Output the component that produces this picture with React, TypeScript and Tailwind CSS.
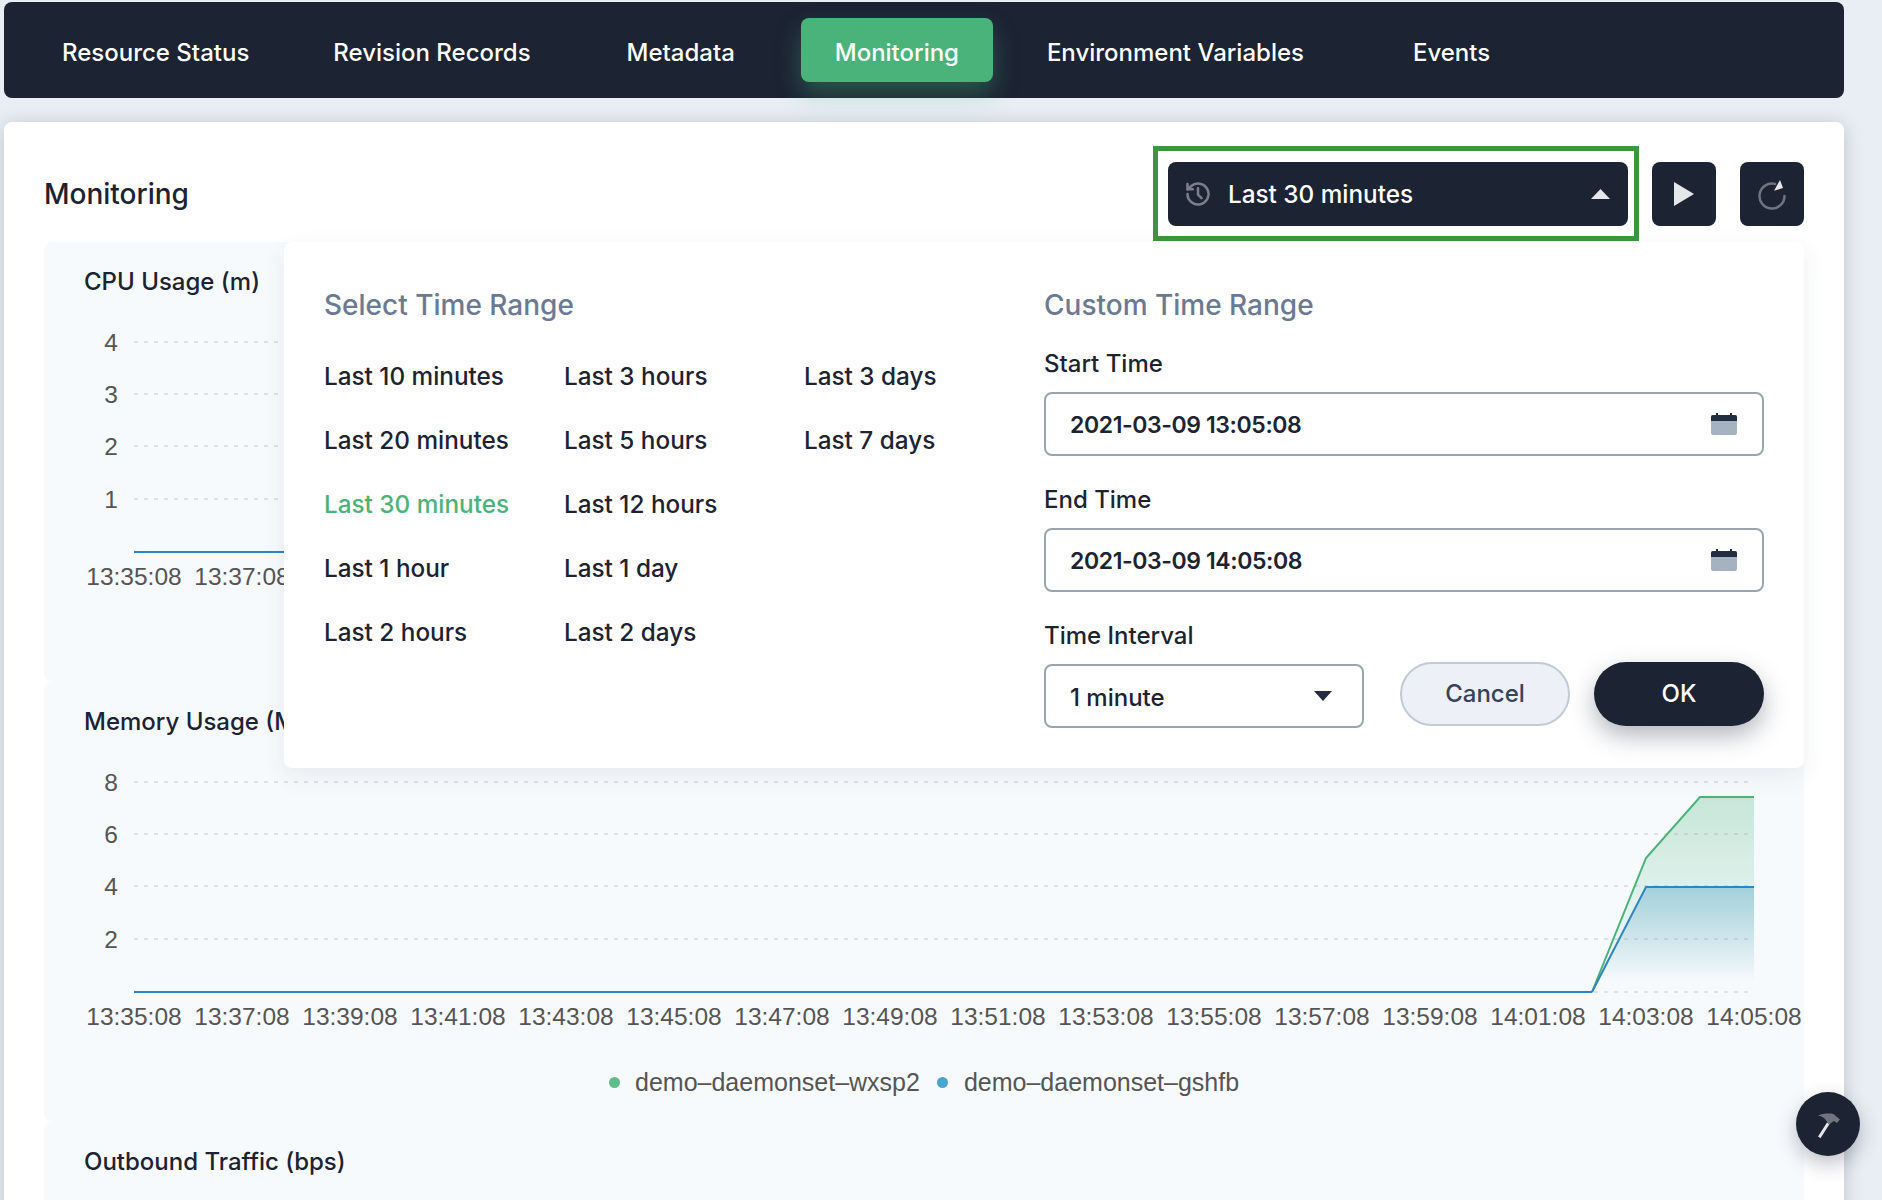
const times = ["13:35:08", "13:37:08", "13:39:08", "13:41:08", "13:43:08", "13:45:08", "13:47:08", "13:49:08", "13:51:08", "13:53:08", "13:55:08", "13:57:08", "13:59:08", "14:01:08", "14:03:08", "14:05:08"];

const tabs = [
  { label: "Resource Status", cls: "ml-[23px] px-[35px]" },
  { label: "Revision Records", cls: "ml-[14px] px-[35px]" },
  { label: "Metadata", cls: "ml-[26px] px-[35px]" },
  { label: "Monitoring", cls: "ml-[31px] w-[192px] justify-center bg-[#4ab37a] rounded-lg shadow-[0_12px_24px_rgba(74,179,122,0.35)]" },
  { label: "Environment Variables", cls: "ml-[19px] px-[35px]" },
  { label: "Events", cls: "ml-[39px] px-[35px]" },
];

const ranges = [
  ["Last 10 minutes", "Last 20 minutes", "Last 30 minutes", "Last 1 hour", "Last 2 hours"],
  ["Last 3 hours", "Last 5 hours", "Last 12 hours", "Last 1 day", "Last 2 days"],
  ["Last 3 days", "Last 7 days"],
];

function ChartCard({ title, yLabels, labels, children }: { title: string; yLabels: string[]; labels: string[]; children?: React.ReactNode }) {
  const rows = [58, 110, 162, 215];
  return (
    <div className="bg-[#f7fafd] rounded-lg h-[440px] shrink-0">
      <div className="px-10 pt-[25px] text-[24px] font-medium leading-[30px] text-[#1c2333]">{title}</div>
      {/* svg coordinates: x = page x - 44, y = page y - card top - 42 */}
      <svg width="1760" height="320" className="block mt-[-13px] font-['Liberation_Sans',sans-serif]">
        {rows.map((y, i) => (
          <g key={y}>
            <line x1="90" x2="1704" y1={y} y2={y} stroke="#dde1e7" strokeWidth="2" strokeDasharray="4 6" />
            <text x="74" y={y + 9} textAnchor="end" fontSize="24.5" fill="#555">{yLabels[i]}</text>
          </g>
        ))}
        <line x1="90" x2="1704" y1="268" y2="268" stroke="#dde1e7" strokeWidth="2" strokeDasharray="4 6" />
        {children}
        <line x1="90" x2="1548" y1="268" y2="268" stroke="#2d86c2" strokeWidth="2" />
        {labels.map((t, i) => (
          <text key={t} x={90 + i * 108} y="300.5" textAnchor="middle" fontSize="24.5" fill="#555">{t}</text>
        ))}
      </svg>
    </div>
  );
}

function CalendarIcon() {
  return (
    <svg width="28" height="22" viewBox="0 0 28 22">
      <rect x="1" y="2" width="26" height="20" rx="2" fill="#a5b3c0" />
      <path d="M1 4a2 2 0 0 1 2-2h22a2 2 0 0 1 2 2v4H1z" fill="#242e42" />
      <rect x="6" y="0" width="2" height="4" fill="#242e42" />
      <rect x="20" y="0" width="2" height="4" fill="#242e42" />
    </svg>
  );
}

function DateInput({ value }: { value: string }) {
  return (
    <div className="mt-[13px] h-[64px] w-[720px] rounded-lg border-2 border-[#9aa5b1] flex items-center justify-between pl-[24px] pr-[24px]">
      <span className="pt-[2px] text-[23px] tracking-[-0.4px] font-semibold text-[#1c2333]">{value}</span>
      <CalendarIcon />
    </div>
  );
}

export default function App() {
  return (
    <div className="relative h-[1200px] w-[1882px] overflow-hidden bg-[#e9eef4] pl-[4px] pt-[2px] font-['Inter',sans-serif]">
      <nav className="w-[1840px] h-[96px] bg-[#1c2333] rounded-lg flex items-center">
        {tabs.map((t) => (
          <div key={t.label} className={`h-[64px] pt-[5px] flex items-center text-[24px] font-medium text-white ${t.cls}`}>{t.label}</div>
        ))}
      </nav>

      <main className="relative w-[1840px] h-[1100px] mt-[24px] bg-white rounded-t-lg shadow-[0_2px_18px_rgba(36,46,66,0.22)] px-10 pt-[24px]">
        <header className="flex items-start justify-between h-[95px]">
          <h1 className="mt-[30px] text-[28px] font-medium leading-[36px] text-[#1c2333]">Monitoring</h1>
          <div className="flex items-start">
            <div className="border-[5px] border-[#3d963f] pt-[11px] pb-[10px] pl-[10px] pr-[6px]">
              <button className="w-[460px] h-[64px] bg-[#1c2333] rounded-lg flex items-center pl-[16px] pr-[18px] text-white text-[24.3px] font-medium">
                <svg width="28" height="28" viewBox="0 0 24 24" fill="none" stroke="#7a7f8a" strokeWidth="2.2" strokeLinecap="round" strokeLinejoin="round">
                  <path d="M3 12a9 9 0 1 0 3-6.7L3 8" />
                  <path d="M3 3.5V8h4.5" />
                  <path d="M12 7v5.5l3 3" />
                </svg>
                <span className="ml-[16px]">Last 30 minutes</span>
                <svg width="19" height="10" viewBox="0 0 19 10" className="ml-auto"><path d="M9.5 0L19 10H0z" fill="#e5e7eb" /></svg>
              </button>
            </div>
            <button className="ml-[13px] mt-[16px] w-[64px] h-[64px] rounded-lg bg-[#1c2333] flex items-center justify-center">
              <svg width="20" height="24" viewBox="0 0 20 24"><path d="M0 0l20 12L0 24z" fill="#e5e7eb" /></svg>
            </button>
            <button className="ml-[24px] mt-[16px] w-[64px] h-[64px] rounded-lg bg-[#1c2333] flex items-center justify-center">
              <svg width="30" height="32" viewBox="0 0 30 32" fill="none">
                <path d="M18 5.9A12.5 12.5 0 1 0 27.5 18" stroke="#6f7480" strokeWidth="2.5" strokeLinecap="round" />
                <path d="M23 2L26 10L17 12.7z" fill="#e5e7eb" />
              </svg>
            </button>
          </div>
        </header>

        <div className="mt-px flex flex-col">
          <ChartCard title="CPU Usage (m)" yLabels={["4", "3", "2", "1"]} labels={times.slice(0, 2)} />
          <ChartCard title="Memory Usage (MiB)" yLabels={["8", "6", "4", "2"]} labels={times}>
            <defs>
              <linearGradient id="greenFill" x1="0" y1="0" x2="0" y2="1">
                <stop offset="0" stopColor="#4ab37a" stopOpacity="0.28" />
                <stop offset="0.95" stopColor="#4ab37a" stopOpacity="0" />
              </linearGradient>
              <linearGradient id="blueFill" x1="0" y1="0" x2="0" y2="1">
                <stop offset="0" stopColor="#55a4c4" stopOpacity="0.42" />
                <stop offset="0.9" stopColor="#55a4c4" stopOpacity="0" />
              </linearGradient>
            </defs>
            <path d="M1548 268L1602 134L1656 73H1710V268z" fill="url(#greenFill)" />
            <path d="M1548 268L1602 163H1710V268z" fill="url(#blueFill)" />
            <path d="M1548 268L1602 134L1656 73H1710" fill="none" stroke="#4ab37a" strokeWidth="2" />
            <path d="M1548 268L1602 163H1710" fill="none" stroke="#2d86c2" strokeWidth="2" />
          </ChartCard>
          <div className="bg-[#f7fafd] rounded-t-lg h-[120px] px-10 pt-[25px] text-[24px] font-medium leading-[30px] text-[#1c2333]">Outbound Traffic (bps)</div>
        </div>

        {/* legend of the memory chart */}
        <div className="absolute left-[605px] top-[942px] flex items-center font-['Liberation_Sans',sans-serif] text-[25px] text-[#555]">
          <span className="h-[11px] w-[11px] rounded-full bg-[#5fbd8a]" />
          <span className="ml-[15px]">demo–daemonset–wxsp2</span>
          <span className="ml-[17px] h-[11px] w-[11px] rounded-full bg-[#4ba3d0]" />
          <span className="ml-[16px]">demo–daemonset–gshfb</span>
        </div>

        {/* time range popup */}
        <div className="absolute left-[280px] top-[120px] w-[1520px] h-[526px] bg-white rounded-lg shadow-[0_8px_24px_rgba(36,46,66,0.08)] flex">
          <div className="w-[760px] pl-[40px] pt-[46px]">
            <div className="text-[28px] font-medium leading-[34px] text-[#6b7a94]">Select Time Range</div>
            <div className="mt-[22px] flex">
              {ranges.map((col, i) => (
                <div key={i} className="w-[240px] flex flex-col">
                  {col.map((r) => (
                    <div key={r} className={`h-[64px] flex items-center text-[24.3px] font-medium ${r === "Last 30 minutes" ? "text-[#4ab37a]" : "text-[#1c2333]"}`}>{r}</div>
                  ))}
                </div>
              ))}
            </div>
          </div>
          <div className="pt-[46px]">
            <div className="text-[28px] font-medium leading-[34px] text-[#6b7a94]">Custom Time Range</div>
            <div className="mt-[27px] text-[24px] font-medium leading-[30px] text-[#1c2333]">Start Time</div>
            <DateInput value="2021-03-09 13:05:08" />
            <div className="mt-[29px] text-[24px] font-medium leading-[30px] text-[#1c2333]">End Time</div>
            <DateInput value="2021-03-09 14:05:08" />
            <div className="mt-[29px] text-[24px] font-medium leading-[30px] text-[#1c2333]">Time Interval</div>
            <div className="mt-[11px] flex items-start">
              <div className="mt-[2px] h-[64px] w-[320px] rounded-lg border-2 border-[#9aa5b1] flex items-center justify-between pl-[24px] pr-[30px] text-[24px] font-medium text-[#1c2333]">
                <span className="pt-[3px]">1 minute</span>
                <svg width="18" height="10" viewBox="0 0 18 10"><path d="M0 0h18L9 10z" fill="#242e42" /></svg>
              </div>
              <button className="ml-[36px] h-[64px] w-[170px] rounded-full border-2 border-[#c1cad6] bg-[#edf1f7] text-[24px] font-medium text-[#36435c]">Cancel</button>
              <button className="ml-[24px] h-[64px] w-[170px] rounded-full bg-[#1c2333] text-[24px] font-medium text-white shadow-[0_10px_24px_rgba(36,46,66,0.35)]">OK</button>
            </div>
          </div>
        </div>
      </main>

      <button className="absolute left-[1796px] top-[1092px] w-[64px] h-[64px] rounded-full bg-[#1c2333] shadow-[0_8px_20px_rgba(36,46,66,0.3)] flex items-center justify-center">
        <svg width="24" height="28" viewBox="0 0 24 28">
          <path d="M3.3 27.3L12.3 13.3" stroke="#e5e7eb" strokeWidth="3" />
          <path d="M2 5.5C7 3.5 13 3 17.5 4L24 9.5L21 13L18 11L13 14.5L9 9C7 7 5 6 2 5.5z" fill="#6f7480" />
        </svg>
      </button>
    </div>
  );
}
